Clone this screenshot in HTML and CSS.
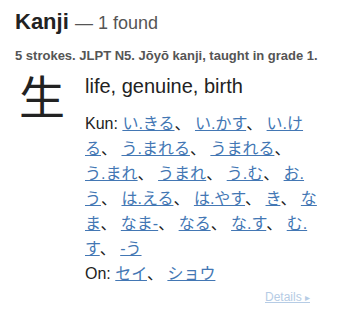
FILE: index.html
```html
<!DOCTYPE html>
<html lang="en">
<head>
<meta charset="utf-8">
<title>Kanji</title>
<link rel="stylesheet" href="styles.css">
</head>
<body>
<div class="page">
  <h1 class="title">Kanji <span class="count">— 1 found</span></h1>
  <p class="sub">5 strokes. JLPT N5. Jōyō kanji, taught in grade 1.</p>
  <div class="entry">
    <div class="kanji" lang="ja">生</div>
    <div class="info">
      <p class="meaning">life, genuine, birth</p>
      <p class="readings kun" lang="ja"><span class="label">Kun:</span> <a href="#">い.きる</a>、 <a href="#">い.かす</a>、 <a href="#">い.け<br>る</a>、 <a href="#">う.まれる</a>、 <a href="#">うまれる</a>、<br><a href="#">う.まれ</a>、 <a href="#">うまれ</a>、 <a href="#">う.む</a>、 <a href="#">お.<br>う</a>、 <a href="#">は.える</a>、 <a href="#">は.やす</a>、 <a href="#">き</a>、 <a href="#">な<br>ま</a>、 <a href="#">なま-</a>、 <a href="#">なる</a>、 <a href="#">な.す</a>、 <a href="#">む.<br>す</a>、 <a href="#">-う</a></p>
      <p class="readings" lang="ja"><span class="label">On:</span> <a href="#">セイ</a>、 <a href="#">ショウ</a></p>
    </div>
  </div>
  <div class="footer"><a class="details" href="#">Details <span class="arrow">▸</span></a></div>
</div>
</body>
</html>
```
FILE: styles.css
```css
html, body {
  margin: 0;
  padding: 0;
  background: #ffffff;
}
body {
  font-family: "Liberation Sans", Arial, "Noto Sans CJK JP", sans-serif;
  color: #222222;
}
.page {
  padding: 9px 15px 0 15px;
  width: 304px;
}
.title {
  margin: 0;
  font-size: 22px;
  line-height: 26px;
  font-weight: bold;
  color: #222222;
}
.count {
  font-size: 18px;
  font-weight: normal;
  color: #555555;
}
.sub {
  margin: 12px 0 0 0;
  font-size: 13px;
  line-height: 16px;
  font-weight: bold;
  color: #555555;
}
.entry {
  display: flex;
  margin-top: 10px;
}
.kanji {
  flex: 0 0 66px;
  padding-left: 4px;
  margin-top: -4px;
  font-family: "Noto Sans CJK JP", sans-serif;
  font-size: 46px;
  line-height: 48px;
  color: #222222;
}
.info {
  flex: 1 1 auto;
  min-width: 0;
}
.meaning {
  margin: 0;
  font-size: 20px;
  line-height: 24px;
  color: #222222;
}
.readings {
  margin: 0;
  font-family: "Liberation Sans", Arial, "Noto Sans CJK JP", sans-serif;
  font-size: 16px;
  line-height: 25px;
  color: #222222;
}
.kun {
  white-space: nowrap;
}
.meaning + .readings {
  margin-top: 13px;
}
.readings a {
  color: #4377b4;
  text-decoration: underline;
}
.footer {
  display: flex;
  justify-content: flex-end;
  margin-top: 3px;
  padding-right: 6px;
}
.details {
  font-size: 12px;
  line-height: 16px;
  color: #b6cce5;
  text-decoration: underline;
}
.arrow {
  padding-right: 3px;
  font-size: 10px;
}
```
